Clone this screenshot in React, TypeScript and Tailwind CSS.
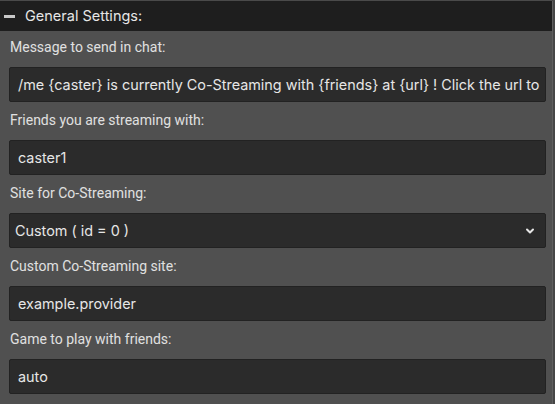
import { ChevronDown } from 'lucide-react'

const fields = [
  { label: 'Message to send in chat:', value: '/me {caster} is currently Co-Streaming with {friends} at {url} ! Click the url to' },
  { label: 'Friends you are streaming with:', value: 'caster1' },
  { label: 'Site for Co-Streaming:', value: 'Custom ( id = 0 )', select: true },
  { label: 'Custom Co-Streaming site:', value: 'example.provider' },
  { label: 'Game to play with friends:', value: 'auto' },
]

export default function App() {
  return (
    <div className="w-[555px] h-[404px] bg-[#505050] overflow-hidden border-t border-[#4a4a4a] flex">
      <div className="flex-1 min-w-0">
        {/* Header */}
        <div className="h-[30px] bg-[#1e1e1e] flex items-center gap-[10px] pl-[4px]">
          <span className="w-[11px] h-[3px] bg-[#c8c8c8]" />
          <span className="text-[14.5px] text-[#e6e6e6] font-['Inter',sans-serif]">General Settings:</span>
        </div>

        <div className="pt-[6px] pl-[9px] pr-[6px] flex flex-col gap-[8px]">
          {fields.map((f) => (
            <div key={f.label}>
              <div className="h-5 leading-5 mb-[10px] text-[14px] text-[#e0e0e0] font-['Roboto',sans-serif] pl-px">{f.label}</div>
              <div
                className={
                  'h-[35px] rounded-[2px] border border-[#222] bg-[#2b2b2b] flex items-center text-[14.4px] text-[#e6e6e6] font-[\'Inter\',sans-serif] whitespace-nowrap overflow-hidden ' +
                  (f.select ? 'pl-[5px] pr-[9px] justify-between' : 'pl-[8px]')
                }
              >
                <span>{f.value}</span>
                {f.select && <ChevronDown className="w-[12px] h-[12px] text-[#e6e6e6]" strokeWidth={4} />}
              </div>
            </div>
          ))}
        </div>
      </div>
      <div className="w-[3px] border-l border-[#5e5e5e] bg-[#464646]" />
    </div>
  )
}
